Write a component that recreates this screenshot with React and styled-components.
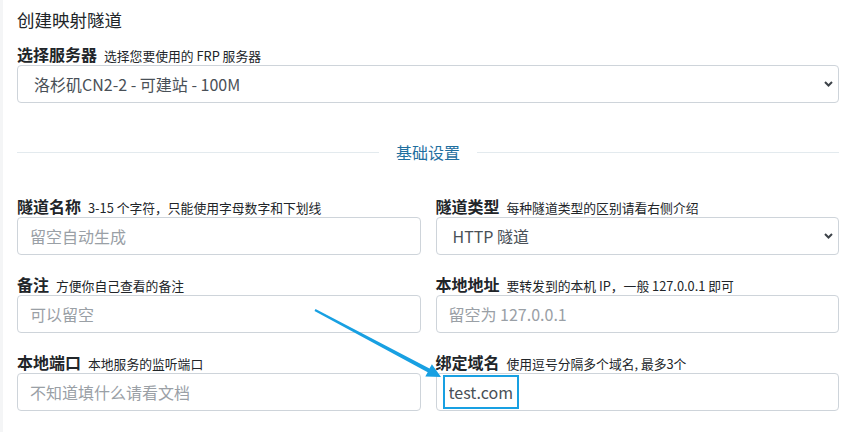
import React from 'react';
import styled, { createGlobalStyle } from 'styled-components';

const GlobalStyle = createGlobalStyle`
  html, body {
    margin: 0;
    padding: 0;
    background: #fff;
  }
  body {
    font-family: "Noto Sans CJK SC", "Noto Sans", sans-serif;
    color: #212529;
  }
`;

const Page = styled.div`
  position: relative;
  width: 856px;
  height: 432px;
  box-sizing: border-box;
  padding: 8px 17px 0 14px;
  border-left: 3px solid #f4f5f6;
  overflow: hidden;
`;

const Title = styled.h4`
  margin: 0 0 12px;
  font-size: 17.5px;
  line-height: 24px;
  font-weight: 400;
  color: #212529;
`;

const Group = styled.div``;

const Label = styled.label`
  display: flex;
  align-items: baseline;
  height: 20px;
  margin-bottom: 1px;
  line-height: 20px;
  font-size: 16px;
  font-weight: 700;
  color: #212529;
  white-space: nowrap;
`;

const Hint = styled.small`
  font-size: 12.8px;
  line-height: 20px;
  font-weight: 400;
  margin-left: 7px;
  color: #212529;
`;

const SelectWrap = styled.div`
  position: relative;
`;

const Select = styled.select`
  display: block;
  width: 100%;
  height: 38px;
  box-sizing: border-box;
  padding: 0 28px 0 16px;
  border: 1px solid #ced4da;
  border-radius: 4px;
  background: #fff;
  font-family: inherit;
  font-size: 16px;
  color: #495057;
  appearance: none;
  outline: none;
`;

const Chevron = styled.svg`
  position: absolute;
  right: 6px;
  top: 50%;
  margin-top: -3px;
  pointer-events: none;
`;

const Input = styled.input`
  display: block;
  width: 100%;
  height: 38px;
  box-sizing: border-box;
  padding: 0 12px;
  border: 1px solid #ced4da;
  border-radius: 4px;
  font-family: inherit;
  font-size: 16px;
  color: #495057;
  outline: none;

  &::placeholder {
    color: #9aa0a6;
  }
`;

const Divider = styled.div`
  display: flex;
  align-items: center;
  height: 24px;
  margin: 37px 0 32px;
  line-height: 24px;
  font-size: 16px;
  color: #1f6f9f;

  &::before,
  &::after {
    content: '';
    flex: 1;
    height: 1px;
    background: #e3eaee;
  }
  &::before { margin-right: 17px; }
  &::after { margin-left: 17px; }
`;

const Grid = styled.div`
  display: grid;
  grid-template-columns: 1fr 1fr;
  column-gap: 15px;
  row-gap: 19px;
`;

const Highlight = styled.div`
  position: absolute;
  left: 440px;
  top: 375px;
  width: 76px;
  height: 34px;
  box-sizing: border-box;
  border: 2px solid #18a0e2;
  pointer-events: none;
`;

const ArrowLayer = styled.svg`
  position: absolute;
  left: 0;
  top: 0;
  pointer-events: none;
`;

function ChevronIcon() {
  return (
    <Chevron width="9" height="6" viewBox="0 0 9 6">
      <path d="M1 1 L4.5 4.5 L8 1" fill="none" stroke="#3d4349" strokeWidth="2" />
    </Chevron>
  );
}

function Field({ label, hint, children }) {
  return (
    <Group>
      <Label>
        {label}
        <Hint>{hint}</Hint>
      </Label>
      {children}
    </Group>
  );
}

export default function App() {
  return (
    <>
      <GlobalStyle />
      <Page>
        <Title>创建映射隧道</Title>

        <Field label="选择服务器" hint="选择您要使用的 FRP 服务器">
          <SelectWrap>
            <Select defaultValue="la">
              <option value="la">洛杉矶CN2-2 - 可建站 - 100M</option>
            </Select>
            <ChevronIcon />
          </SelectWrap>
        </Field>

        <Divider>基础设置</Divider>

        <Grid>
          <Field label="隧道名称" hint="3-15 个字符，只能使用字母数字和下划线">
            <Input placeholder="留空自动生成" />
          </Field>
          <Field label="隧道类型" hint="每种隧道类型的区别请看右侧介绍">
            <SelectWrap>
              <Select defaultValue="http">
                <option value="http">HTTP 隧道</option>
              </Select>
              <ChevronIcon />
            </SelectWrap>
          </Field>
          <Field label="备注" hint="方便你自己查看的备注">
            <Input placeholder="可以留空" />
          </Field>
          <Field label="本地地址" hint="要转发到的本机 IP，一般 127.0.0.1 即可">
            <Input placeholder="留空为 127.0.0.1" />
          </Field>
          <Field label="本地端口" hint="本地服务的监听端口">
            <Input placeholder="不知道填什么请看文档" />
          </Field>
          <Field label="绑定域名" hint="使用逗号分隔多个域名, 最多3个">
            <Input defaultValue="test.com" />
          </Field>
        </Grid>

        <Highlight />
        <ArrowLayer width="856" height="432" viewBox="0 0 856 432">
          <polygon
            points="311.5,310.9 424.7,372.2 422.3,376.6 438,377 428.9,364.2 426.5,368.6 312.5,309.1"
            fill="#18a0e2"
          />
        </ArrowLayer>
      </Page>
    </>
  );
}
